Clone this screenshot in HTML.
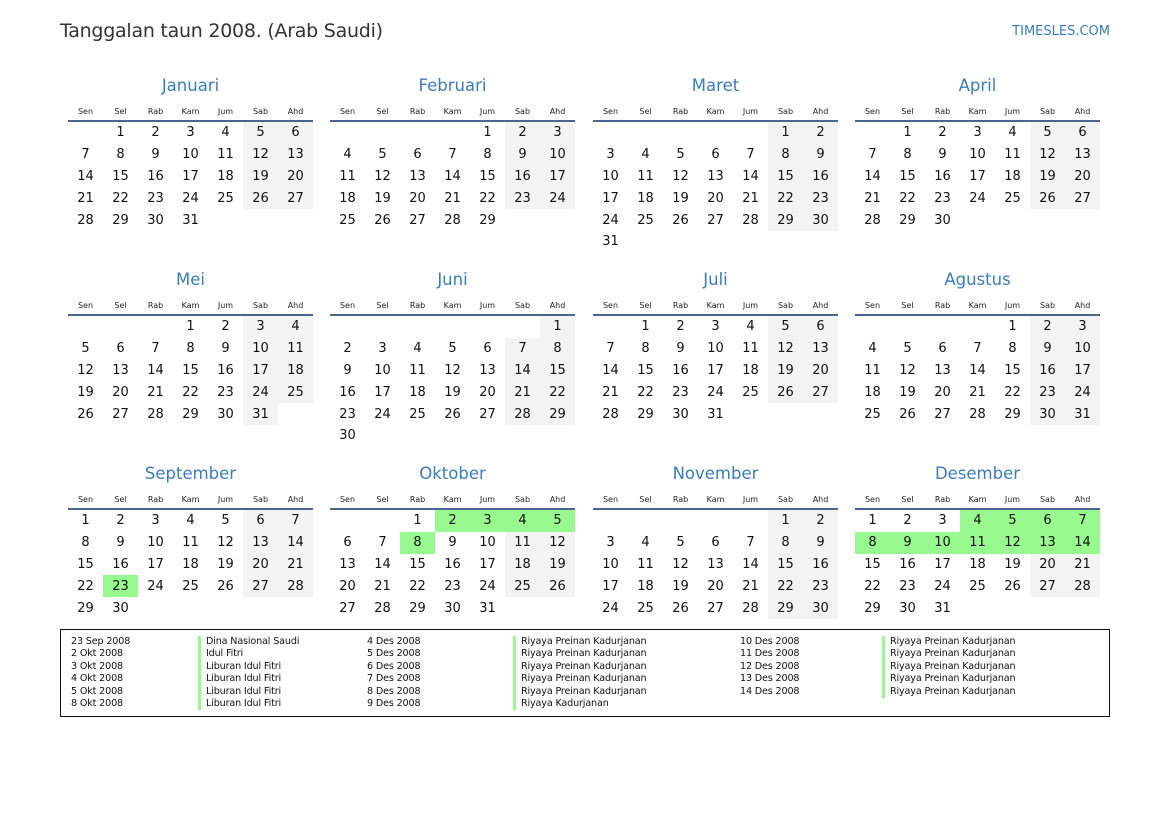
<!DOCTYPE html>
<html><head><meta charset="utf-8"><style>
body{margin:0;width:1169px;height:827px;background:#fff;position:relative;font-family:"DejaVu Sans","Liberation Sans",sans-serif;color:#111;overflow:hidden}
.h1{position:absolute;left:60px;top:20px;font-size:19px;letter-spacing:-0.25px;color:#333}
.site{position:absolute;right:59px;top:24px;font-size:13px;color:#3a7cc0}
.m{position:absolute;width:245px}
.t{height:23px;line-height:23px;text-align:center;font-size:16.5px;color:#3a7cc0}
table{border-collapse:collapse;table-layout:fixed;width:245px}
td{width:35px;height:21.8px;padding:0;text-align:center;font-size:13px;vertical-align:middle}
th{height:18px;padding:5px 0 0 0;font-size:8px;font-weight:normal;color:#222;border-bottom:2px solid #4a6590;vertical-align:middle}
.w{background:#f3f3f3}.g{background:#98f98e}
.leg{position:absolute;left:60px;top:629px;width:1048px;height:86px;border:1.5px solid #111}
.c{position:absolute;top:6px;font-size:9.6px;letter-spacing:-0.15px;line-height:12.4px;color:#111}
.b{border-left:3px solid #98f98e;padding-left:5px}
</style></head><body>
<div class="h1">Tanggalan taun 2008. (Arab Saudi)</div>
<div class="site">TIMESLES.COM</div>

<div class="m" style="left:68px;top:74px"><div class="t">Januari</div><table>
<tr><th>Sen</th><th>Sel</th><th>Rab</th><th>Kam</th><th>Jum</th><th>Sab</th><th>Ahd</th></tr>
<tr><td></td><td>1</td><td>2</td><td>3</td><td>4</td><td class=w>5</td><td class=w>6</td></tr>
<tr><td>7</td><td>8</td><td>9</td><td>10</td><td>11</td><td class=w>12</td><td class=w>13</td></tr>
<tr><td>14</td><td>15</td><td>16</td><td>17</td><td>18</td><td class=w>19</td><td class=w>20</td></tr>
<tr><td>21</td><td>22</td><td>23</td><td>24</td><td>25</td><td class=w>26</td><td class=w>27</td></tr>
<tr><td>28</td><td>29</td><td>30</td><td>31</td><td></td><td></td><td></td></tr>
</table></div>

<div class="m" style="left:330px;top:74px"><div class="t">Februari</div><table>
<tr><th>Sen</th><th>Sel</th><th>Rab</th><th>Kam</th><th>Jum</th><th>Sab</th><th>Ahd</th></tr>
<tr><td></td><td></td><td></td><td></td><td>1</td><td class=w>2</td><td class=w>3</td></tr>
<tr><td>4</td><td>5</td><td>6</td><td>7</td><td>8</td><td class=w>9</td><td class=w>10</td></tr>
<tr><td>11</td><td>12</td><td>13</td><td>14</td><td>15</td><td class=w>16</td><td class=w>17</td></tr>
<tr><td>18</td><td>19</td><td>20</td><td>21</td><td>22</td><td class=w>23</td><td class=w>24</td></tr>
<tr><td>25</td><td>26</td><td>27</td><td>28</td><td>29</td><td></td><td></td></tr>
</table></div>

<div class="m" style="left:593px;top:74px"><div class="t">Maret</div><table>
<tr><th>Sen</th><th>Sel</th><th>Rab</th><th>Kam</th><th>Jum</th><th>Sab</th><th>Ahd</th></tr>
<tr><td></td><td></td><td></td><td></td><td></td><td class=w>1</td><td class=w>2</td></tr>
<tr><td>3</td><td>4</td><td>5</td><td>6</td><td>7</td><td class=w>8</td><td class=w>9</td></tr>
<tr><td>10</td><td>11</td><td>12</td><td>13</td><td>14</td><td class=w>15</td><td class=w>16</td></tr>
<tr><td>17</td><td>18</td><td>19</td><td>20</td><td>21</td><td class=w>22</td><td class=w>23</td></tr>
<tr><td>24</td><td>25</td><td>26</td><td>27</td><td>28</td><td class=w>29</td><td class=w>30</td></tr>
<tr><td>31</td><td></td><td></td><td></td><td></td><td></td><td></td></tr>
</table></div>

<div class="m" style="left:855px;top:74px"><div class="t">April</div><table>
<tr><th>Sen</th><th>Sel</th><th>Rab</th><th>Kam</th><th>Jum</th><th>Sab</th><th>Ahd</th></tr>
<tr><td></td><td>1</td><td>2</td><td>3</td><td>4</td><td class=w>5</td><td class=w>6</td></tr>
<tr><td>7</td><td>8</td><td>9</td><td>10</td><td>11</td><td class=w>12</td><td class=w>13</td></tr>
<tr><td>14</td><td>15</td><td>16</td><td>17</td><td>18</td><td class=w>19</td><td class=w>20</td></tr>
<tr><td>21</td><td>22</td><td>23</td><td>24</td><td>25</td><td class=w>26</td><td class=w>27</td></tr>
<tr><td>28</td><td>29</td><td>30</td><td></td><td></td><td></td><td></td></tr>
</table></div>

<div class="m" style="left:68px;top:268px"><div class="t">Mei</div><table>
<tr><th>Sen</th><th>Sel</th><th>Rab</th><th>Kam</th><th>Jum</th><th>Sab</th><th>Ahd</th></tr>
<tr><td></td><td></td><td></td><td>1</td><td>2</td><td class=w>3</td><td class=w>4</td></tr>
<tr><td>5</td><td>6</td><td>7</td><td>8</td><td>9</td><td class=w>10</td><td class=w>11</td></tr>
<tr><td>12</td><td>13</td><td>14</td><td>15</td><td>16</td><td class=w>17</td><td class=w>18</td></tr>
<tr><td>19</td><td>20</td><td>21</td><td>22</td><td>23</td><td class=w>24</td><td class=w>25</td></tr>
<tr><td>26</td><td>27</td><td>28</td><td>29</td><td>30</td><td class=w>31</td><td></td></tr>
</table></div>

<div class="m" style="left:330px;top:268px"><div class="t">Juni</div><table>
<tr><th>Sen</th><th>Sel</th><th>Rab</th><th>Kam</th><th>Jum</th><th>Sab</th><th>Ahd</th></tr>
<tr><td></td><td></td><td></td><td></td><td></td><td></td><td class=w>1</td></tr>
<tr><td>2</td><td>3</td><td>4</td><td>5</td><td>6</td><td class=w>7</td><td class=w>8</td></tr>
<tr><td>9</td><td>10</td><td>11</td><td>12</td><td>13</td><td class=w>14</td><td class=w>15</td></tr>
<tr><td>16</td><td>17</td><td>18</td><td>19</td><td>20</td><td class=w>21</td><td class=w>22</td></tr>
<tr><td>23</td><td>24</td><td>25</td><td>26</td><td>27</td><td class=w>28</td><td class=w>29</td></tr>
<tr><td>30</td><td></td><td></td><td></td><td></td><td></td><td></td></tr>
</table></div>

<div class="m" style="left:593px;top:268px"><div class="t">Juli</div><table>
<tr><th>Sen</th><th>Sel</th><th>Rab</th><th>Kam</th><th>Jum</th><th>Sab</th><th>Ahd</th></tr>
<tr><td></td><td>1</td><td>2</td><td>3</td><td>4</td><td class=w>5</td><td class=w>6</td></tr>
<tr><td>7</td><td>8</td><td>9</td><td>10</td><td>11</td><td class=w>12</td><td class=w>13</td></tr>
<tr><td>14</td><td>15</td><td>16</td><td>17</td><td>18</td><td class=w>19</td><td class=w>20</td></tr>
<tr><td>21</td><td>22</td><td>23</td><td>24</td><td>25</td><td class=w>26</td><td class=w>27</td></tr>
<tr><td>28</td><td>29</td><td>30</td><td>31</td><td></td><td></td><td></td></tr>
</table></div>

<div class="m" style="left:855px;top:268px"><div class="t">Agustus</div><table>
<tr><th>Sen</th><th>Sel</th><th>Rab</th><th>Kam</th><th>Jum</th><th>Sab</th><th>Ahd</th></tr>
<tr><td></td><td></td><td></td><td></td><td>1</td><td class=w>2</td><td class=w>3</td></tr>
<tr><td>4</td><td>5</td><td>6</td><td>7</td><td>8</td><td class=w>9</td><td class=w>10</td></tr>
<tr><td>11</td><td>12</td><td>13</td><td>14</td><td>15</td><td class=w>16</td><td class=w>17</td></tr>
<tr><td>18</td><td>19</td><td>20</td><td>21</td><td>22</td><td class=w>23</td><td class=w>24</td></tr>
<tr><td>25</td><td>26</td><td>27</td><td>28</td><td>29</td><td class=w>30</td><td class=w>31</td></tr>
</table></div>

<div class="m" style="left:68px;top:462px"><div class="t">September</div><table>
<tr><th>Sen</th><th>Sel</th><th>Rab</th><th>Kam</th><th>Jum</th><th>Sab</th><th>Ahd</th></tr>
<tr><td>1</td><td>2</td><td>3</td><td>4</td><td>5</td><td class=w>6</td><td class=w>7</td></tr>
<tr><td>8</td><td>9</td><td>10</td><td>11</td><td>12</td><td class=w>13</td><td class=w>14</td></tr>
<tr><td>15</td><td>16</td><td>17</td><td>18</td><td>19</td><td class=w>20</td><td class=w>21</td></tr>
<tr><td>22</td><td class=g>23</td><td>24</td><td>25</td><td>26</td><td class=w>27</td><td class=w>28</td></tr>
<tr><td>29</td><td>30</td><td></td><td></td><td></td><td></td><td></td></tr>
</table></div>

<div class="m" style="left:330px;top:462px"><div class="t">Oktober</div><table>
<tr><th>Sen</th><th>Sel</th><th>Rab</th><th>Kam</th><th>Jum</th><th>Sab</th><th>Ahd</th></tr>
<tr><td></td><td></td><td>1</td><td class=g>2</td><td class=g>3</td><td class=g>4</td><td class=g>5</td></tr>
<tr><td>6</td><td>7</td><td class=g>8</td><td>9</td><td>10</td><td class=w>11</td><td class=w>12</td></tr>
<tr><td>13</td><td>14</td><td>15</td><td>16</td><td>17</td><td class=w>18</td><td class=w>19</td></tr>
<tr><td>20</td><td>21</td><td>22</td><td>23</td><td>24</td><td class=w>25</td><td class=w>26</td></tr>
<tr><td>27</td><td>28</td><td>29</td><td>30</td><td>31</td><td></td><td></td></tr>
</table></div>

<div class="m" style="left:593px;top:462px"><div class="t">November</div><table>
<tr><th>Sen</th><th>Sel</th><th>Rab</th><th>Kam</th><th>Jum</th><th>Sab</th><th>Ahd</th></tr>
<tr><td></td><td></td><td></td><td></td><td></td><td class=w>1</td><td class=w>2</td></tr>
<tr><td>3</td><td>4</td><td>5</td><td>6</td><td>7</td><td class=w>8</td><td class=w>9</td></tr>
<tr><td>10</td><td>11</td><td>12</td><td>13</td><td>14</td><td class=w>15</td><td class=w>16</td></tr>
<tr><td>17</td><td>18</td><td>19</td><td>20</td><td>21</td><td class=w>22</td><td class=w>23</td></tr>
<tr><td>24</td><td>25</td><td>26</td><td>27</td><td>28</td><td class=w>29</td><td class=w>30</td></tr>
</table></div>

<div class="m" style="left:855px;top:462px"><div class="t">Desember</div><table>
<tr><th>Sen</th><th>Sel</th><th>Rab</th><th>Kam</th><th>Jum</th><th>Sab</th><th>Ahd</th></tr>
<tr><td>1</td><td>2</td><td>3</td><td class=g>4</td><td class=g>5</td><td class=g>6</td><td class=g>7</td></tr>
<tr><td class=g>8</td><td class=g>9</td><td class=g>10</td><td class=g>11</td><td class=g>12</td><td class=g>13</td><td class=g>14</td></tr>
<tr><td>15</td><td>16</td><td>17</td><td>18</td><td>19</td><td class=w>20</td><td class=w>21</td></tr>
<tr><td>22</td><td>23</td><td>24</td><td>25</td><td>26</td><td class=w>27</td><td class=w>28</td></tr>
<tr><td>29</td><td>30</td><td>31</td><td></td><td></td><td></td><td></td></tr>
</table></div>

<div class="leg">
<div class="c" style="left:10px">23 Sep 2008<br>2 Okt 2008<br>3 Okt 2008<br>4 Okt 2008<br>5 Okt 2008<br>8 Okt 2008</div>
<div class="c b" style="left:137px">Dina Nasional Saudi<br>Idul Fitri<br>Liburan Idul Fitri<br>Liburan Idul Fitri<br>Liburan Idul Fitri<br>Liburan Idul Fitri</div>
<div class="c" style="left:306px">4 Des 2008<br>5 Des 2008<br>6 Des 2008<br>7 Des 2008<br>8 Des 2008<br>9 Des 2008</div>
<div class="c b" style="left:452px">Riyaya Preinan Kadurjanan<br>Riyaya Preinan Kadurjanan<br>Riyaya Preinan Kadurjanan<br>Riyaya Preinan Kadurjanan<br>Riyaya Preinan Kadurjanan<br>Riyaya Kadurjanan</div>
<div class="c" style="left:679px">10 Des 2008<br>11 Des 2008<br>12 Des 2008<br>13 Des 2008<br>14 Des 2008</div>
<div class="c b" style="left:821px">Riyaya Preinan Kadurjanan<br>Riyaya Preinan Kadurjanan<br>Riyaya Preinan Kadurjanan<br>Riyaya Preinan Kadurjanan<br>Riyaya Preinan Kadurjanan</div>
</div>
</body></html>
